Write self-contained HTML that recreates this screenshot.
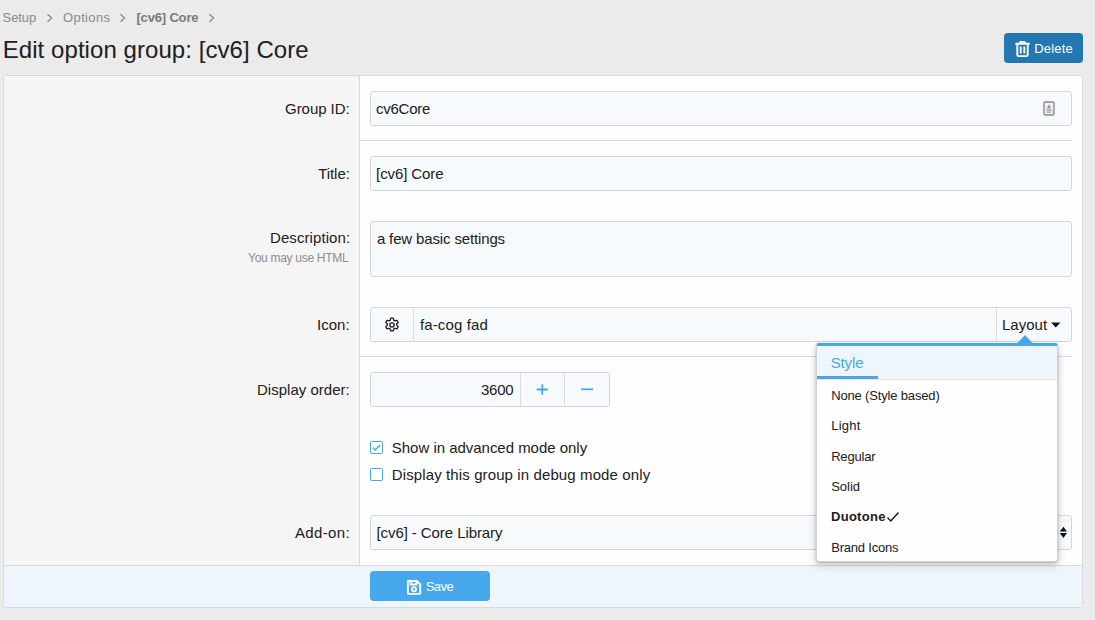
<!DOCTYPE html>
<html><head><meta charset="utf-8">
<style>
html,body{margin:0;padding:0}
body{width:1095px;height:620px;background:#ebebeb;position:relative;overflow:hidden;font-family:"Liberation Sans",sans-serif;color:#141414}
.a{position:absolute;box-sizing:border-box}
.t{position:absolute;white-space:nowrap;line-height:0;font-family:"Liberation Sans",sans-serif}
.block{left:3px;top:75px;width:1080px;height:533px;border:1px solid #dadada;border-radius:3px;background:#fefefe;overflow:hidden}
.lab{left:0;top:0;width:356px;height:489px;background:#f5f5f5;border-right:1px solid #d8d8d8}
.sep{height:1px;background:#dcdcdc}
.inp{background:#f7fafd;border:1px solid #d5d5d5;border-radius:3px}
.vdiv{width:1px;background:#dcdcdc}
.foot{left:0;top:489px;width:1078px;height:42px;background:#eef5fc;border-top:1px solid #d8d8d8}
.btn{border-radius:4px}
.cb{width:13px;height:13px;border:1px solid #47a7eb;border-radius:1.5px;background:#fff}
.menu{left:816px;top:343px;width:242px;height:219px;background:#fefefe;border:1px solid #d0d0d0;border-top:3px solid #47a7eb;border-radius:3px 3px 3px 3px;box-shadow:0 1px 3px rgba(0,0,0,.18),0 3px 9px rgba(0,0,0,.2)}
</style></head><body>
<!-- breadcrumb chevrons -->
<svg class="a" style="left:46px;top:13px" width="8" height="10" viewBox="0 0 8 10"><path d="M1.5 1.2L5.6 5L1.5 8.8" stroke="#8a8a8a" stroke-width="1.3" fill="none"/></svg>
<svg class="a" style="left:119px;top:13px" width="8" height="10" viewBox="0 0 8 10"><path d="M1.5 1.2L5.6 5L1.5 8.8" stroke="#8a8a8a" stroke-width="1.3" fill="none"/></svg>
<svg class="a" style="left:208px;top:13px" width="8" height="10" viewBox="0 0 8 10"><path d="M1.5 1.2L5.6 5L1.5 8.8" stroke="#8a8a8a" stroke-width="1.3" fill="none"/></svg>
<!-- delete button -->
<div class="a btn" style="left:1004px;top:33px;width:79px;height:30px;background:#2577b1"></div>
<svg class="a" style="left:1014px;top:40px" width="17" height="18" viewBox="0 0 17 18">
 <path d="M2.1 3.7h12.8" stroke="#fff" stroke-width="1.9" fill="none" stroke-linecap="round"/>
 <path d="M6 3.4V2.6Q6 1.8 6.9 1.8h3.2Q11 1.8 11 2.6V3.4" stroke="#fff" stroke-width="1.7" fill="none"/>
 <path d="M3.3 4v10.8Q3.3 16.1 4.7 16.1h7.6Q13.7 16.1 13.7 14.8V4" stroke="#fff" stroke-width="1.9" fill="none"/>
 <path d="M6.7 6.6v7M10.3 6.6v7" stroke="#fff" stroke-width="1.8"/>
</svg>

<div class="a block">
 <div class="a lab"></div>
 <div class="a sep" style="left:356px;top:64px;width:712px"></div>
 <div class="a sep" style="left:356px;top:280px;width:712px"></div>
 <div class="a foot"></div>
</div>

<!-- inputs (page coords) -->
<div class="a inp" style="left:370px;top:91px;width:702px;height:35px"></div>
<svg class="a" style="left:1043px;top:101px" width="12" height="15" viewBox="0 0 12 15">
 <rect x="1" y="1" width="10" height="13" rx="1.2" fill="#f0f0f0" stroke="#8a8a8a" stroke-width="1.4"/>
 <path d="M6 3.5L8 7.2H4z" fill="#8a8a8a"/>
 <rect x="3.5" y="8.3" width="5" height="1.2" fill="#8a8a8a"/>
 <rect x="3.5" y="10.5" width="5" height="1.2" fill="#a0a0a0"/>
</svg>
<div class="a inp" style="left:370px;top:156px;width:702px;height:35px"></div>
<div class="a inp" style="left:370px;top:221px;width:702px;height:56px"></div>
<div class="a inp" style="left:370px;top:307px;width:702px;height:35px"></div>
<div class="a vdiv" style="left:413px;top:308px;height:33px"></div>
<div class="a vdiv" style="left:996px;top:308px;height:33px"></div>
<svg class="a" style="left:384px;top:317px" width="16" height="16" viewBox="0 0 16 16">
 <path d="M6.7 1.2h2.6l.45 1.9 1.3.75 1.85-.6 1.3 2.25-1.45 1.3v1.5l1.45 1.3-1.3 2.25-1.85-.6-1.3.75-.45 1.9H6.7l-.45-1.9-1.3-.75-1.85.6-1.3-2.25 1.45-1.3v-1.5L1.8 5.5l1.3-2.25 1.85.6 1.3-.75z" fill="none" stroke="#141414" stroke-width="1.25" stroke-linejoin="round"/>
 <circle cx="8" cy="8" r="2.1" fill="none" stroke="#141414" stroke-width="1.3"/>
</svg>
<svg class="a" style="left:1050px;top:321px" width="12" height="8" viewBox="0 0 12 8">
 <path d="M1 1.5h9.5L5.75 6.5z" fill="#141414"/>
</svg>

<div class="a inp" style="left:370px;top:372px;width:240px;height:35px"></div>
<div class="a vdiv" style="left:520px;top:373px;height:33px"></div>
<div class="a vdiv" style="left:564px;top:373px;height:33px"></div>
<svg class="a" style="left:535px;top:382px" width="15" height="15" viewBox="0 0 15 15">
 <path d="M7.3 2.2v10.6M1.8 7.5h11" stroke="#47a7eb" stroke-width="1.8"/>
</svg>
<svg class="a" style="left:580px;top:382px" width="15" height="15" viewBox="0 0 15 15">
 <path d="M1 7.3h12" stroke="#47a7eb" stroke-width="1.8"/>
</svg>

<div class="a cb" style="left:370px;top:441px"></div>
<svg class="a" style="left:370px;top:441px" width="13" height="13" viewBox="0 0 13 13">
 <path d="M3 6.8l2.3 2.2L10 4" stroke="#47a7eb" stroke-width="1.4" fill="none"/>
</svg>
<div class="a cb" style="left:370px;top:468px"></div>

<div class="a inp" style="left:370px;top:515px;width:702px;height:35px"></div>
<svg class="a" style="left:1059px;top:525px" width="9" height="15" viewBox="0 0 9 15">
 <path d="M4.4 1.7L8 6.5H0.8z M4.4 13L8 8H0.8z" fill="#141414"/>
</svg>

<!-- save button -->
<div class="a btn" style="left:370px;top:571px;width:120px;height:30px;background:#47a7eb"></div>
<svg class="a" style="left:406px;top:579px" width="16" height="16" viewBox="0 0 16 16">
 <path d="M1.9 2.6Q1.9 2 2.5 2h8.4l3.3 3.3v8.9q0 .7-.7.7H2.6q-.7 0-.7-.7z" fill="none" stroke="#fff" stroke-width="1.9"/>
 <path d="M4.6 2.2v3.3h5.8V2.2" fill="none" stroke="#fff" stroke-width="1.9"/>
 <circle cx="8" cy="10.3" r="2.1" fill="none" stroke="#fff" stroke-width="1.8"/>
</svg>

<!-- menu -->
<div class="a menu">
 <div class="a" style="left:0;top:0;width:240px;height:33px;background:#eff5fc"></div>
 <div class="a" style="left:0;top:30px;width:61px;height:3px;background:#47a7eb"></div>
 <div class="a" style="left:0;top:33px;width:240px;height:1px;background:#e3e3e3"></div>
</div>
<svg class="a" style="left:1016px;top:334px" width="18" height="10" viewBox="0 0 18 10">
 <path d="M9 1L17 9.5H1z" fill="#47a7eb"/>
</svg>
<svg class="a" style="left:886px;top:511px" width="14" height="12" viewBox="0 0 14 12">
 <path d="M1.5 6.5l3.3 3.5L12.5 1.5" stroke="#141414" stroke-width="1.3" fill="none"/>
</svg>

<div class="t" id="bc1" style="left:2.54px;top:18.00px;font-size:13px;letter-spacing:-0.065px;color:#8a8a8a;">Setup</div>
<div class="t" id="bc3" style="left:63.08px;top:18.00px;font-size:13px;letter-spacing:0.353px;color:#8a8a8a;">Options</div>
<div class="t" id="bc5" style="left:136.44px;top:18.00px;font-size:13px;letter-spacing:-0.167px;color:#7a7a7a;font-weight:bold;">[cv6] Core</div>
<div class="t" id="title" style="left:2.72px;top:49.80px;font-size:24px;letter-spacing:0.063px;color:#202020;">Edit option group: [cv6] Core</div>
<div class="t" id="del" style="left:1034.28px;top:48.90px;font-size:13px;letter-spacing:0.184px;color:#ffffff;">Delete</div>
<div class="t" id="l1" style="left:285.08px;top:108.90px;font-size:15px;letter-spacing:-0.065px;color:#202020;">Group ID:</div>
<div class="t" id="v1" style="left:376.00px;top:108.60px;font-size:15px;letter-spacing:-0.253px;color:#202020;">cv6Core</div>
<div class="t" id="l2" style="left:318.18px;top:173.60px;font-size:15px;letter-spacing:-0.052px;color:#202020;">Title:</div>
<div class="t" id="v2" style="left:376.10px;top:173.60px;font-size:15px;letter-spacing:-0.100px;color:#202020;">[cv6] Core</div>
<div class="t" id="l3" style="left:270.00px;top:238.40px;font-size:15px;letter-spacing:0.084px;color:#202020;">Description:</div>
<div class="t" id="h3" style="left:248.10px;top:257.50px;font-size:12px;letter-spacing:-0.291px;color:#8c8c8c;">You may use HTML</div>
<div class="t" id="v3" style="left:376.90px;top:238.80px;font-size:15px;letter-spacing:-0.142px;color:#202020;">a few basic settings</div>
<div class="t" id="l4" style="left:317.00px;top:324.70px;font-size:15px;letter-spacing:0.030px;color:#202020;">Icon:</div>
<div class="t" id="v4" style="left:419.92px;top:324.50px;font-size:15px;letter-spacing:0.142px;color:#202020;">fa-cog fad</div>
<div class="t" id="lay" style="left:1001.92px;top:324.50px;font-size:15px;letter-spacing:0.020px;color:#202020;">Layout</div>
<div class="t" id="l5" style="left:257.00px;top:389.70px;font-size:15px;letter-spacing:0.009px;color:#202020;">Display order:</div>
<div class="t" id="v5" style="left:481.00px;top:389.70px;font-size:15px;letter-spacing:-0.267px;color:#202020;">3600</div>
<div class="t" id="c1" style="left:391.82px;top:447.80px;font-size:15px;letter-spacing:-0.025px;color:#202020;">Show in advanced mode only</div>
<div class="t" id="c2" style="left:391.82px;top:475.00px;font-size:15px;letter-spacing:0.112px;color:#202020;">Display this group in debug mode only</div>
<div class="t" id="l6" style="left:295.00px;top:532.80px;font-size:15px;letter-spacing:0.353px;color:#202020;">Add-on:</div>
<div class="t" id="v6" style="left:376.46px;top:532.80px;font-size:15px;letter-spacing:-0.077px;color:#202020;">[cv6] - Core Library</div>
<div class="t" id="save" style="left:425.64px;top:587.10px;font-size:13px;letter-spacing:-0.540px;color:#ffffff;">Save</div>
<div class="t" id="mh" style="left:830.64px;top:362.60px;font-size:15px;letter-spacing:-0.090px;color:#47a7eb;">Style</div>
<div class="t" id="m1" style="left:831.18px;top:395.60px;font-size:13px;letter-spacing:-0.160px;color:#202020;">None (Style based)</div>
<div class="t" id="m2" style="left:831.18px;top:425.70px;font-size:13px;letter-spacing:0.255px;color:#202020;">Light</div>
<div class="t" id="m3" style="left:831.18px;top:456.60px;font-size:13px;letter-spacing:-0.197px;color:#202020;">Regular</div>
<div class="t" id="m4" style="left:831.18px;top:486.60px;font-size:13px;letter-spacing:0.005px;color:#202020;">Solid</div>
<div class="t" id="m5" style="left:831.00px;top:516.50px;font-size:13px;letter-spacing:0.277px;color:#202020;font-weight:bold;">Duotone</div>
<div class="t" id="m6" style="left:831.18px;top:547.60px;font-size:13px;letter-spacing:-0.198px;color:#202020;">Brand Icons</div>
</body></html>
